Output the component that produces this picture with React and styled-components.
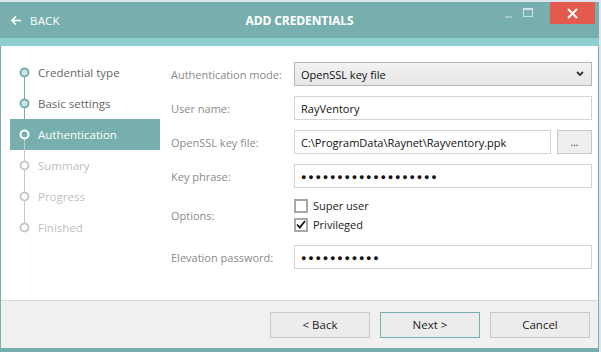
import React from "react";
import styled, { createGlobalStyle } from "styled-components";

const TEAL = "#76afad";

const GlobalStyle = createGlobalStyle`
  html, body {
    margin: 0;
    padding: 0;
    background: #dfe3ec;
  }
  body {
    font-family: "Open Sans", "Noto Sans", sans-serif;
    font-size: 11px;
  }
`;

const steps = [
  { label: "Credential type", state: "done" },
  { label: "Basic settings", state: "done" },
  { label: "Authentication", state: "active" },
  { label: "Summary", state: "todo" },
  { label: "Progress", state: "todo" },
  { label: "Finished", state: "todo" },
];

function StepMarker({ state, first, last, nextState }) {
  const ring = state === "active" ? "#ffffff" : state === "done" ? TEAL : "#c8c8c8";
  const dot = state === "active" ? TEAL : state === "done" ? "#cfe3e2" : "#ffffff";
  const upColor = state === "todo" ? "#c8c8c8" : TEAL;
  const downColor = nextState === "todo" || state === "todo" ? "#c8c8c8" : TEAL;
  return (
    <svg width="14" height="31" viewBox="0 0 14 31">
      {!first && <line x1="7.5" y1="0" x2="7.5" y2="11" stroke={upColor} strokeWidth="1" />}
      {!last && <line x1="7.5" y1="20" x2="7.5" y2="31" stroke={downColor} strokeWidth="1" />}
      <circle cx="7.5" cy="15.5" r="4" fill={dot} stroke={ring} strokeWidth="2" />
    </svg>
  );
}

export default function App() {
  return (
    <>
      <GlobalStyle />
      <Screen>
        <Window>
          <TitleBar>
            <BackLink>
              <svg width="10" height="9" viewBox="0 0 10 9">
                <path d="M5 0.5 L1 4.5 L5 8.5 M1 4.5 H10" stroke="#fff" strokeWidth="1.6" fill="none" />
              </svg>
              BACK
            </BackLink>
            <Title>ADD CREDENTIALS</Title>
            <Controls>
              <CtrlButton>
                <svg width="9" height="9" viewBox="0 0 9 9">
                  <line x1="1" y1="8" x2="8" y2="8" stroke="#cfe3e2" strokeWidth="1" />
                </svg>
              </CtrlButton>
              <CtrlButton>
                <svg width="11" height="10" viewBox="0 0 11 10">
                  <rect x="0.5" y="0.5" width="9" height="8" stroke="#cfe3e2" strokeWidth="1" fill="none" />
                  <line x1="0.5" y1="1.5" x2="9.5" y2="1.5" stroke="#cfe3e2" strokeWidth="1" />
                </svg>
              </CtrlButton>
              <CloseButton>
                <svg width="11" height="11" viewBox="0 0 11 11">
                  <path d="M1 1 L10 10 M10 1 L1 10" stroke="#fff" strokeWidth="2" />
                </svg>
              </CloseButton>
            </Controls>
          </TitleBar>
          <Strip />
          <Body>
            <Sidebar>
              {steps.map((s, i) => (
                <Step key={s.label} $state={s.state}>
                  <StepMarker
                    state={s.state}
                    first={i === 0}
                    last={i === steps.length - 1}
                    nextState={steps[i + 1] && steps[i + 1].state}
                  />
                  <span>{s.label}</span>
                </Step>
              ))}
            </Sidebar>
            <Form>
              <Row>
                <Label>Authentication mode:</Label>
                <Select>
                  <span>OpenSSL key file</span>
                  <svg width="8" height="6" viewBox="0 0 8 6">
                    <path d="M1 1 L4 4 L7 1" stroke="#333" strokeWidth="1.8" fill="none" />
                  </svg>
                </Select>
              </Row>
              <Row>
                <Label>User name:</Label>
                <Field>RayVentory</Field>
              </Row>
              <Row>
                <Label>OpenSSL key file:</Label>
                <FieldGroup>
                  <Field>C:\ProgramData\Raynet\Rayventory.ppk</Field>
                  <BrowseButton>...</BrowseButton>
                </FieldGroup>
              </Row>
              <Row>
                <Label>Key phrase:</Label>
                <Field>
                  <Dots>{"●".repeat(19)}</Dots>
                </Field>
              </Row>
              <OptionsRow>
                <Label>Options:</Label>
                <CheckList>
                  <CheckLine>
                    <Box />
                    Super user
                  </CheckLine>
                  <CheckLine>
                    <Box>
                      <svg width="10" height="9" viewBox="0 0 10 9">
                        <path d="M1 4.5 L3.8 7.5 L9 1" stroke="#111" strokeWidth="1.8" fill="none" />
                      </svg>
                    </Box>
                    Privileged
                  </CheckLine>
                </CheckList>
              </OptionsRow>
              <Row>
                <Label>Elevation password:</Label>
                <Field>
                  <Dots>{"●".repeat(11)}</Dots>
                </Field>
              </Row>
            </Form>
          </Body>
          <Footer>
            <Button>&lt; Back</Button>
            <Button $primary>Next &gt;</Button>
            <Button>Cancel</Button>
          </Footer>
        </Window>
      </Screen>
    </>
  );
}

const Screen = styled.div`
  width: 601px;
  height: 352px;
  padding-top: 2px;
  box-sizing: border-box;
  overflow: hidden;
`;

const Window = styled.div`
  width: 599px;
  height: 350px;
  display: flex;
  flex-direction: column;
  background: ${TEAL};
  box-sizing: border-box;
`;

const TitleBar = styled.div`
  height: 36px;
  display: grid;
  grid-template-columns: 1fr auto 1fr;
  align-items: center;
  color: #fff;
`;

const BackLink = styled.div`
  display: flex;
  align-items: center;
  gap: 9px;
  padding-left: 11px;
  font-size: 11.5px;
  letter-spacing: 0.2px;
  svg {
    margin-top: 1px;
  }
`;

const Title = styled.div`
  font-weight: 700;
  font-size: 12px;
  letter-spacing: -0.1px;
`;

const Controls = styled.div`
  display: flex;
  justify-content: flex-end;
  align-self: start;
  padding-right: 4px;
`;

const CtrlButton = styled.div`
  width: 20px;
  height: 22px;
  display: flex;
  align-items: center;
  justify-content: center;
`;

const CloseButton = styled.div`
  width: 45px;
  height: 22px;
  background: #e35a4f;
  margin-left: 12px;
  display: flex;
  align-items: center;
  justify-content: center;
`;

const Strip = styled.div`
  height: 8px;
  background: #8ccfce;
`;

const Body = styled.div`
  flex: 1;
  display: flex;
  background: #fff;
  margin: 0 1px;
`;

const Sidebar = styled.div`
  width: 150px;
  margin-left: 9px;
  padding-top: 11px;
`;

const stepColor = { done: "#666", active: "#fff", todo: "#c0c0c0" };

const Step = styled.div`
  height: 31px;
  display: flex;
  align-items: center;
  gap: 7px;
  padding-left: 7px;
  font-size: 11.5px;
  color: ${(p) => stepColor[p.$state]};
  background: ${(p) => (p.$state === "active" ? TEAL : "transparent")};
  svg {
    flex: none;
  }
`;

const Form = styled.div`
  flex: 1;
  padding: 16px 6px 0 11px;
  display: flex;
  flex-direction: column;
  gap: 10px;
`;

const Row = styled.div`
  display: flex;
  align-items: center;
  height: 24px;
`;

const OptionsRow = styled(Row)`
  height: 40px;
  margin: -3px 0 0;
`;

const Label = styled.div`
  width: 123px;
  flex: none;
  color: #8a8a8a;
  font-size: 11px;
`;

const Field = styled.div`
  flex: 1;
  height: 24px;
  box-sizing: border-box;
  border: 1px solid #d4d4d4;
  display: flex;
  align-items: center;
  padding-left: 6px;
  color: #111;
  font-size: 11px;
  white-space: nowrap;
`;

const Select = styled(Field)`
  background: linear-gradient(#f2f2f2, #e6e6e6);
  border-color: #b8b8b8;
  justify-content: space-between;
  padding-right: 7px;
`;

const FieldGroup = styled.div`
  flex: 1;
  display: flex;
  gap: 6px;
`;

const BrowseButton = styled.div`
  width: 35px;
  height: 24px;
  box-sizing: border-box;
  border: 1px solid #c8c8c8;
  background: #eeeeee;
  display: flex;
  align-items: flex-end;
  justify-content: center;
  padding-bottom: 6px;
  font-size: 10px;
  line-height: 1;
  color: #333;
`;

const Dots = styled.span`
  font-size: 9px;
  letter-spacing: 1.8px;
  color: #111;
`;

const CheckList = styled.div`
  display: flex;
  flex-direction: column;
  gap: 4px;
`;

const CheckLine = styled.div`
  display: flex;
  align-items: center;
  gap: 5px;
  color: #222;
  font-size: 11px;
`;

const Box = styled.div`
  width: 14px;
  height: 14px;
  box-sizing: border-box;
  border: 2px solid #a8a8a8;
  background: #fff;
  display: flex;
  align-items: center;
  justify-content: center;
`;

const Footer = styled.div`
  height: 47px;
  margin: 0 1px 4px;
  background: #f0f0f0;
  border-top: 1px solid #d8d8d8;
  display: flex;
  align-items: center;
  justify-content: flex-end;
  gap: 10px;
  padding-right: 8px;
`;

const Button = styled.div`
  width: 100px;
  height: 26px;
  box-sizing: border-box;
  border: 1px solid ${(p) => (p.$primary ? TEAL : "#c8c8c8")};
  background: #ececec;
  display: flex;
  align-items: center;
  justify-content: center;
  color: #222;
  font-size: 11.5px;
`;
